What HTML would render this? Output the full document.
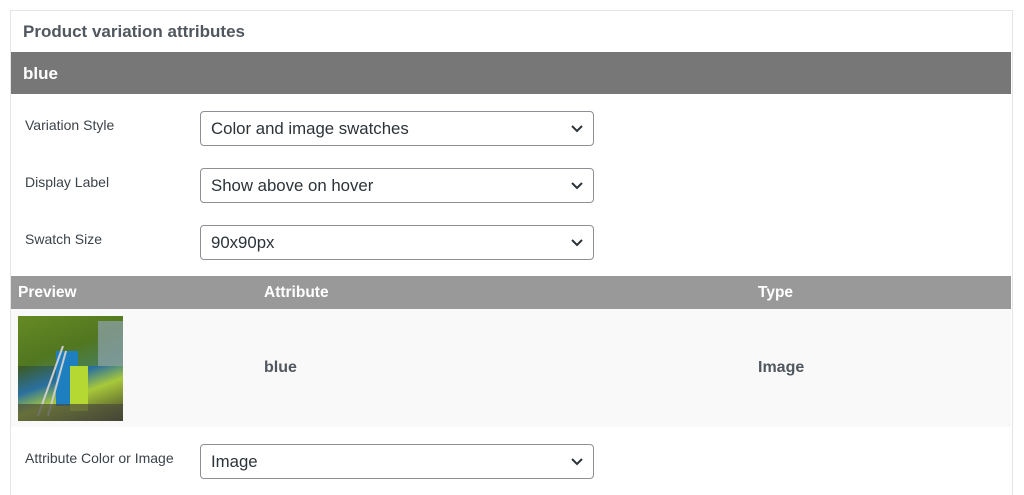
<!DOCTYPE html><html><head><style>
html,body{margin:0;background:#fff;font-family:"Liberation Sans",sans-serif;width:1024px;height:495px;overflow:hidden;position:relative}
.panel{position:absolute;left:10px;top:10px;width:1001px;height:495px;border:1px solid #e5e5e5;border-bottom:none;background:#fff}
.a{position:absolute}
.lbl{position:absolute;left:25px;font-size:14px;color:#3c434a}
.sel{position:absolute;left:200px;width:394px;height:35px;border:1px solid #8c8f94;border-radius:4px;background:#fff;font-size:16.8px;color:#2c3338;line-height:33px;box-sizing:border-box;padding-left:10px}
.sel svg{position:absolute;right:9px;top:12px}
</style></head><body>
<div class="panel"></div>
<div class="a" style="left:23px;top:22px;font-size:17px;font-weight:bold;color:#50575e">Product variation attributes</div>
<div class="a" style="left:11px;top:52px;width:1000px;height:42px;background:#777"></div>
<div class="a" style="left:23px;top:64px;font-size:17px;font-weight:bold;color:#fff">blue</div>
<div class="lbl" style="top:117px">Variation Style</div>
<div class="sel" style="top:111px">Color and image swatches<svg width="14" height="9" viewBox="0 0 14 9"><path d="M2 2l5 5 5-5" stroke="#2c3338" stroke-width="2" fill="none"/></svg></div>
<div class="lbl" style="top:174px">Display Label</div>
<div class="sel" style="top:168px">Show above on hover<svg width="14" height="9" viewBox="0 0 14 9"><path d="M2 2l5 5 5-5" stroke="#2c3338" stroke-width="2" fill="none"/></svg></div>
<div class="lbl" style="top:231px">Swatch Size</div>
<div class="sel" style="top:225px">90x90px<svg width="14" height="9" viewBox="0 0 14 9"><path d="M2 2l5 5 5-5" stroke="#2c3338" stroke-width="2" fill="none"/></svg></div>
<div class="a" style="left:11px;top:276px;width:1000px;height:33px;background:#999"></div>
<div class="a" style="left:18px;top:284px;font-size:15.5px;font-weight:bold;color:#fff">Preview</div>
<div class="a" style="left:264px;top:284px;font-size:15.5px;font-weight:bold;color:#fff">Attribute</div>
<div class="a" style="left:758px;top:284px;font-size:15.5px;font-weight:bold;color:#fff">Type</div>
<div class="a" style="left:11px;top:309px;width:1000px;height:118px;background:#f9f9f9"></div>
<div class="a" style="left:18px;top:316px;width:105px;height:105px;background:linear-gradient(160deg,#6f8a2a 0%,#3d5a1e 35%,#2a6f9f 55%,#a8c93a 70%,#3b3a2a 100%)">
<svg width="105" height="105"><rect x="0" y="0" width="105" height="50" fill="#5f8a22" opacity=".6"/><rect x="80" y="5" width="25" height="45" fill="#8fa3b0" opacity=".7"/><rect x="38" y="35" width="22" height="55" fill="#1e7fc0"/><rect x="52" y="50" width="18" height="45" fill="#b5d833"/><path d="M20 100L45 30M30 100L48 35" stroke="#ccc" stroke-width="2"/><rect x="0" y="88" width="105" height="17" fill="#4a4a3a" opacity=".7"/></svg></div>
<div class="a" style="left:264px;top:359px;font-size:16px;font-weight:bold;color:#50575e">blue</div>
<div class="a" style="left:758px;top:359px;font-size:16px;font-weight:bold;color:#50575e">Image</div>
<div class="lbl" style="top:450px">Attribute Color or Image</div>
<div class="sel" style="top:444px">Image<svg width="14" height="9" viewBox="0 0 14 9"><path d="M2 2l5 5 5-5" stroke="#2c3338" stroke-width="2" fill="none"/></svg></div>
</body></html>
